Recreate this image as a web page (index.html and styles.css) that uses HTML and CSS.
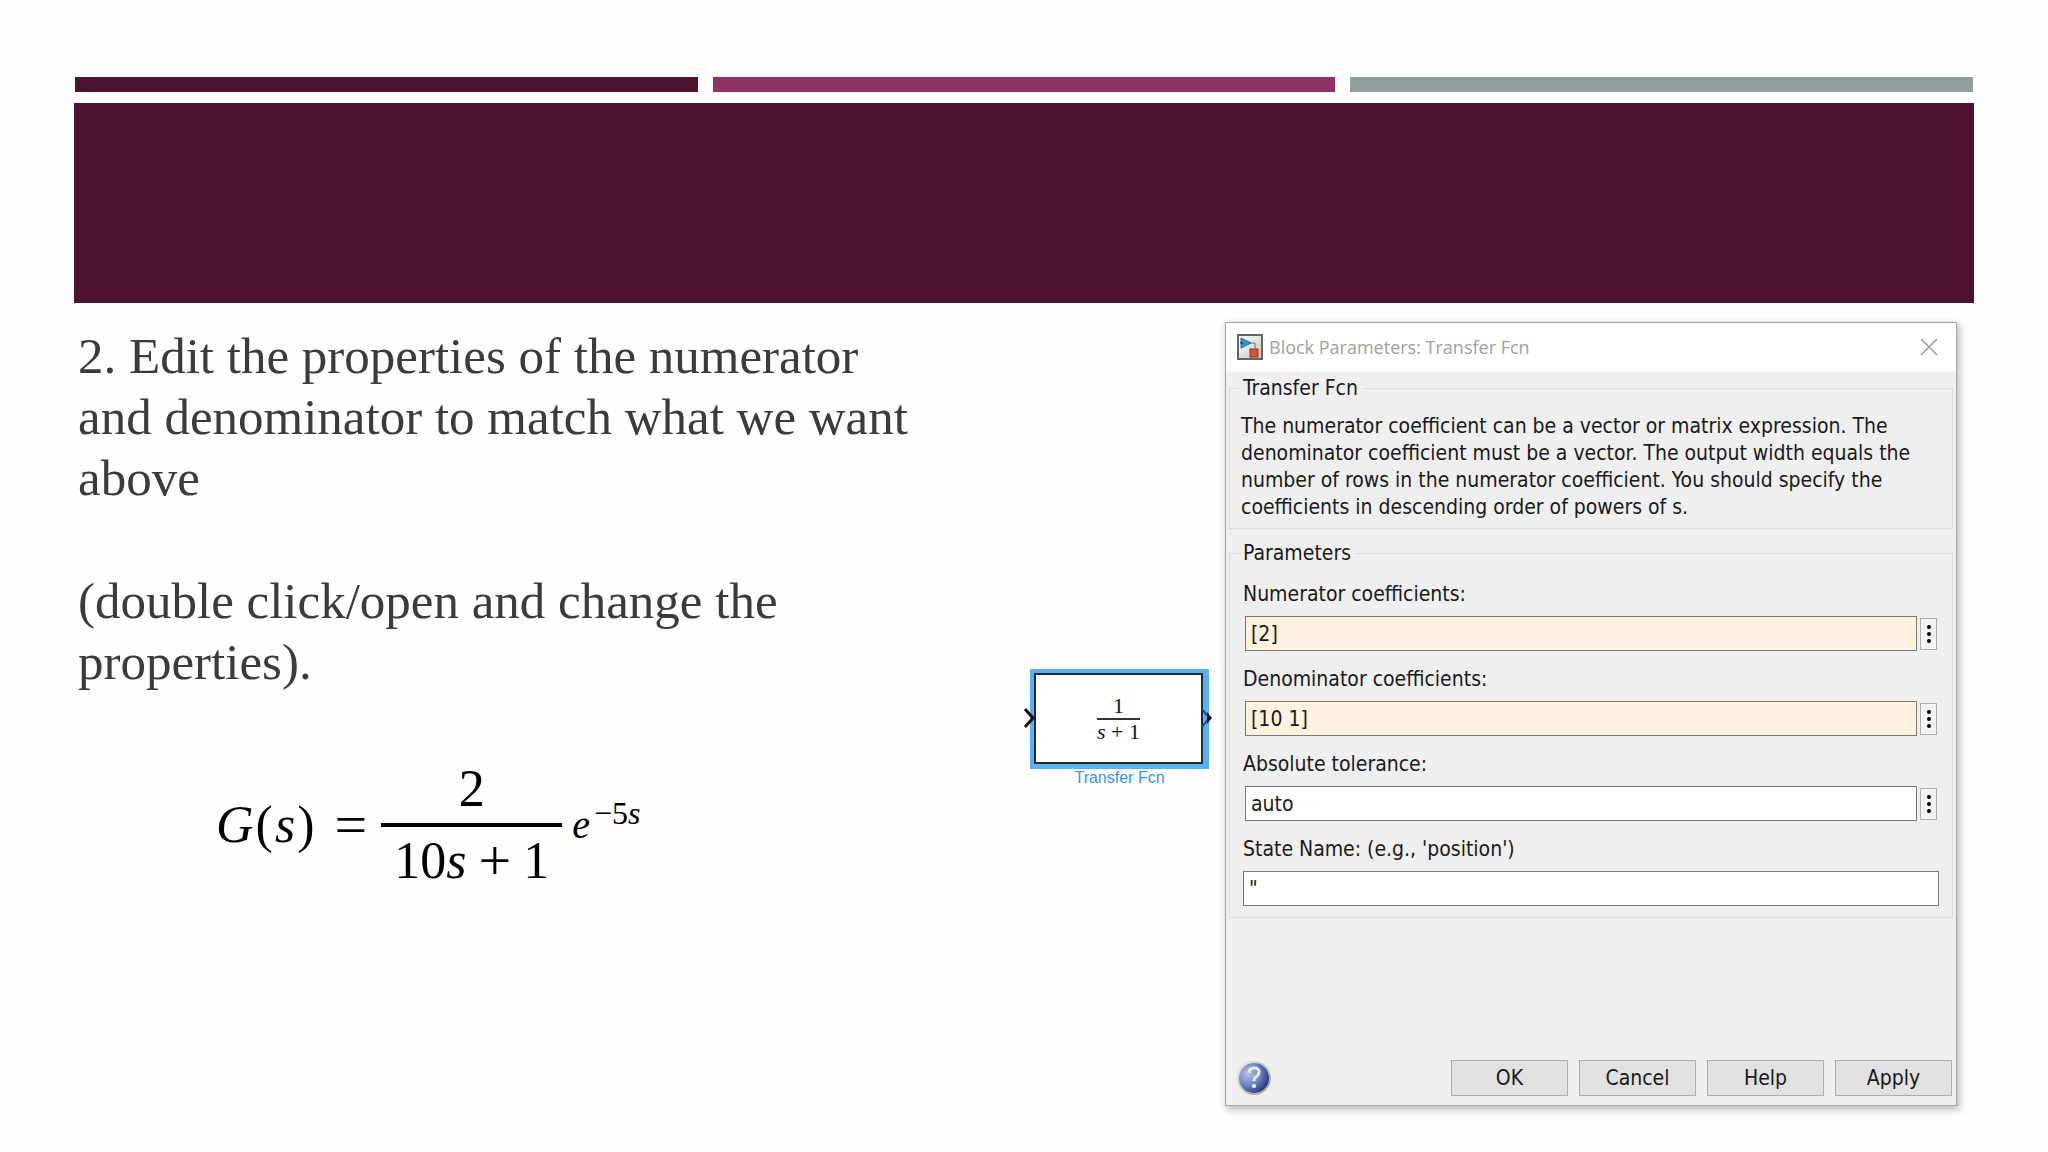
FILE: index.html
```html
<!DOCTYPE html>
<html lang="en">
<head>
  <meta charset="UTF-8">
  <meta name="viewport" content="width=device-width, initial-scale=1.0">
  <title>Transfer Function Parameters</title>
  <link rel="stylesheet" href="styles.css">
</head>
<body>
  <header>
    <div class="stripes">
      <span class="stripe dark"></span>
      <span class="stripe pink"></span>
      <span class="stripe gray"></span>
    </div>
    <div class="banner"></div>
  </header>

  <main class="content">
    <section class="instructions">
      <p>2. Edit the properties of the numerator and denominator to match what we want above</p>
      <p>(double click/open and change the properties).</p>

      <div class="equation">
        <span class="lhs"><i>G</i><span class="paren">(</span><i>s</i><span class="paren">)</span></span>
        <span class="equals">=</span>
        <span class="fraction">
          <span class="top">2</span>
          <span class="bottom"><span>10<i>s</i></span><span class="plus">+</span><span>1</span></span>
        </span>
        <span class="exponential"><i>e</i><sup>−5<i>s</i></sup></span>
      </div>
    </section>

    <section class="diagram">
      <div class="block">
        <svg class="port port-in" width="12" height="22" viewBox="0 0 12 22"><path d="M1 2 L9 11 L1 20" fill="none" stroke="#111" stroke-width="3"/></svg>
        <div class="block-fraction">
          <span class="block-top">1</span>
          <span><i>s</i> + 1</span>
        </div>
        <svg class="port port-out" width="12" height="22" viewBox="0 0 12 22"><path d="M1 2 L8 11 L1 20" fill="none" stroke="#0f4f80" stroke-width="2"/><path d="M6 5 L11 11 L6 17 Z" fill="#111"/></svg>
      </div>
      <div class="block-name">Transfer Fcn</div>
    </section>

    <form class="dialog">
      <div class="title-bar">
        <svg width="26" height="26" viewBox="0 0 26 26">
          <defs>
            <linearGradient id="tile" x1="0" y1="0" x2="1" y2="1">
              <stop offset="0" stop-color="#fff"/>
              <stop offset="1" stop-color="#c4c4c4"/>
            </linearGradient>
          </defs>
          <rect x="1" y="1" width="24" height="24" fill="url(#tile)" stroke="#666" stroke-width="2"/>
          <path d="M13 9 H18 V15" fill="none" stroke="#667" stroke-width="1"/>
          <path d="M4 4 L14 9 L4 14 Z" fill="#3295c8" stroke="#1b6c9c" stroke-width="1"/>
          <path d="M3 9 H6" stroke="#123" stroke-width="1"/>
          <rect x="13" y="15" width="8" height="8" fill="#d8512c" stroke="#9b3218" stroke-width="1"/>
        </svg>
        <span class="title">Block Parameters: Transfer Fcn</span>
        <button type="button" class="close" aria-label="Close">
          <svg width="18" height="18" viewBox="0 0 18 18"><path d="M1 1 L17 17 M17 1 L1 17" stroke="#999" stroke-width="1.5"/></svg>
        </button>
      </div>

      <fieldset class="about">
        <legend>Transfer Fcn</legend>
        <p>The numerator coefficient can be a vector or matrix expression. The denominator coefficient must be a vector. The output width equals the number of rows in the numerator coefficient. You should specify the coefficients in descending order of powers of s.</p>
      </fieldset>

      <fieldset class="parameters">
        <legend>Parameters</legend>
        <label for="numerator">Numerator coefficients:</label>
        <div class="field">
          <input type="text" id="numerator" class="changed" value="[2]">
          <button type="button" class="more" aria-label="Numerator options"><svg width="4" height="18" viewBox="0 0 4 18"><circle cx="2" cy="2" r="2"/><circle cx="2" cy="9" r="2"/><circle cx="2" cy="16" r="2"/></svg></button>
        </div>
        <label for="denominator">Denominator coefficients:</label>
        <div class="field">
          <input type="text" id="denominator" class="changed" value="[10 1]">
          <button type="button" class="more" aria-label="Denominator options"><svg width="4" height="18" viewBox="0 0 4 18"><circle cx="2" cy="2" r="2"/><circle cx="2" cy="9" r="2"/><circle cx="2" cy="16" r="2"/></svg></button>
        </div>
        <label for="tolerance">Absolute tolerance:</label>
        <div class="field">
          <input type="text" id="tolerance" value="auto">
          <button type="button" class="more" aria-label="Tolerance options"><svg width="4" height="18" viewBox="0 0 4 18"><circle cx="2" cy="2" r="2"/><circle cx="2" cy="9" r="2"/><circle cx="2" cy="16" r="2"/></svg></button>
        </div>
        <label for="state">State Name: (e.g., 'position')</label>
        <div class="field wide">
          <input type="text" id="state" value="&quot;">
        </div>
      </fieldset>

      <div class="actions">
        <button type="button" class="info" aria-label="About this block">
          <svg width="36" height="36" viewBox="0 0 36 36">
            <defs>
              <radialGradient id="ball" cx="0.3" cy="0.35" r="0.75">
                <stop offset="0" stop-color="#b3c3e6"/>
                <stop offset="0.5" stop-color="#7388c2"/>
                <stop offset="1" stop-color="#26357c"/>
              </radialGradient>
              <linearGradient id="ring" x1="0" y1="0" x2="1" y2="1">
                <stop offset="0" stop-color="#eee"/>
                <stop offset="1" stop-color="#999"/>
              </linearGradient>
            </defs>
            <circle cx="18" cy="18" r="17" fill="url(#ring)"/>
            <circle cx="18" cy="18" r="15" fill="url(#ball)"/>
            <path d="M13 13 Q13 8 18 8 Q23 8 23 12 Q23 15 20 17 Q18 18 18 21" fill="none" stroke="#e3e9f7" stroke-width="3"/>
            <circle cx="18" cy="26" r="2" fill="#fff"/>
          </svg>
        </button>
        <button type="submit">OK</button>
        <button type="button">Cancel</button>
        <button type="button">Help</button>
        <button type="button">Apply</button>
      </div>
    </form>
  </main>
</body>
</html>
```

FILE: styles.css
```css
* {
  box-sizing: border-box;
}
body {
  margin: 0;
  padding: 77px 74px 40px;
  background-color: #fefefe;
}
.stripes {
  display: grid;
  grid-template-columns: repeat(3, 1fr);
  gap: 15px;
  padding: 0 1px;
  margin-bottom: 11px;
}
.stripe {
  height: 15px;
}
.dark {
  background-color: #4c1431;
}
.pink {
  background-color: #903163;
}
.gray {
  background-color: #929f9f;
}
.banner {
  height: 200px;
  background-color: #4c1431;
}
.content {
  display: grid;
  grid-template-columns: 950fr 201fr 732fr;
  align-items: start;
  padding-right: 17px;
}

/* left side text */
.instructions {
  padding: 23px 0 0 4px;
  font-family: "Liberation Serif", "Times New Roman", serif;
  font-size: 51px;
  line-height: 61px;
  color: #3b3b3b;
}
.instructions p {
  max-width: 850px;
  margin: 0 0 62px;
}
.equation {
  display: flex;
  align-items: center;
  padding-left: 138px;
  color: #000;
  font-size: 52px;
  line-height: 68px;
}
.paren {
  margin: 0 2px;
}
.equals {
  margin: 0 14px 0 18px;
  font-size: 58px;
}
.fraction {
  display: flex;
  flex-direction: column;
  width: 181px;
}
.top {
  text-align: center;
  border-bottom: 4px solid #000;
}
.bottom {
  display: flex;
  justify-content: center;
  gap: 12px;
}
.plus {
  font-size: 58px;
}
.exponential {
  margin-left: 10px;
  font-size: 40px;
}
.exponential sup {
  margin-left: 4px;
  font-size: 32px;
  line-height: 0;
}

/* simulink block */
.diagram {
  padding: 366px 16px 0 6px;
}
.block {
  position: relative;
  display: flex;
  align-items: center;
  justify-content: center;
  height: 100px;
  background-color: #fff;
  border: 4px solid #5ab1ef;
  border-right-width: 6px;
  border-bottom-width: 5px;
  box-shadow: inset 0 0 0 2px #1b2a38;
}
.block-fraction {
  font-family: "Liberation Serif", "Times New Roman", serif;
  font-size: 22px;
  line-height: 24px;
  text-align: center;
  color: #111;
}
.block-top {
  display: block;
  border-bottom: 2px solid #333;
}
.port {
  position: absolute;
  top: 34px;
}
.port-in {
  left: -10px;
}
.port-out {
  right: -10px;
}
.block-name {
  font-family: "Liberation Sans", Arial, sans-serif;
  font-size: 16px;
  line-height: 18px;
  text-align: center;
  color: #2e96f3;
}

/* dialog window */
.dialog {
  margin-top: 19px;
  border: 1px solid #a6a6a6;
  background-color: #efefef;
  box-shadow: 2px 3px 7px 1px rgba(0, 0, 0, 0.25);
  font-family: "DejaVu Sans Condensed", Tahoma, sans-serif;
  font-size: 21px;
  line-height: 27px;
  color: #1a1a1a;
}
.title-bar {
  display: flex;
  align-items: center;
  gap: 6px;
  height: 48px;
  padding: 0 18px 0 11px;
  background-color: #fff;
}
.title {
  flex: 1;
  font-family: "Open Sans", "Segoe UI", sans-serif;
  font-size: 18px;
  color: #a0a0a0;
}
button {
  font: inherit;
  color: inherit;
}
.close, .info {
  display: flex;
  padding: 0;
  border: none;
  background: none;
}
fieldset {
  margin: 0 3px;
  padding: 0 11px;
  border: 1px solid #dcdcdc;
}
legend {
  padding: 0 4px;
  margin-left: -2px;
}
.about p {
  margin: 11px 0 7px;
}
.about {
  margin-top: 4px;
}
.parameters {
  margin-top: 11px;
  padding-bottom: 11px;
}
.parameters legend {
  line-height: 26px;
}
label {
  display: block;
  margin: 15px 0 8px 2px;
}
.field {
  display: flex;
  align-items: center;
  gap: 3px;
  margin: 0 4px;
}
.field.wide {
  margin: 0 2px;
}
input {
  flex: 1;
  min-width: 0;
  height: 35px;
  padding: 0 5px;
  border: 1px solid #7a7a7a;
  border-radius: 0;
  background-color: #fff;
  font: inherit;
  color: inherit;
}
.changed {
  background-color: #fff3e0;
}
.more {
  display: flex;
  align-items: center;
  justify-content: center;
  width: 17px;
  height: 32px;
  padding: 0;
  border: 1px solid #adadad;
  background-color: #f4f4f4;
}
.actions {
  display: flex;
  align-items: center;
  gap: 11px;
  padding: 142px 4px 9px 10px;
}
.actions button {
  width: 117px;
  height: 36px;
  padding: 0;
  border: 1px solid #adadad;
  background-color: #e1e1e1;
}
.actions .info {
  width: 36px;
  margin-right: auto;
  border: none;
  background: none;
}
```
